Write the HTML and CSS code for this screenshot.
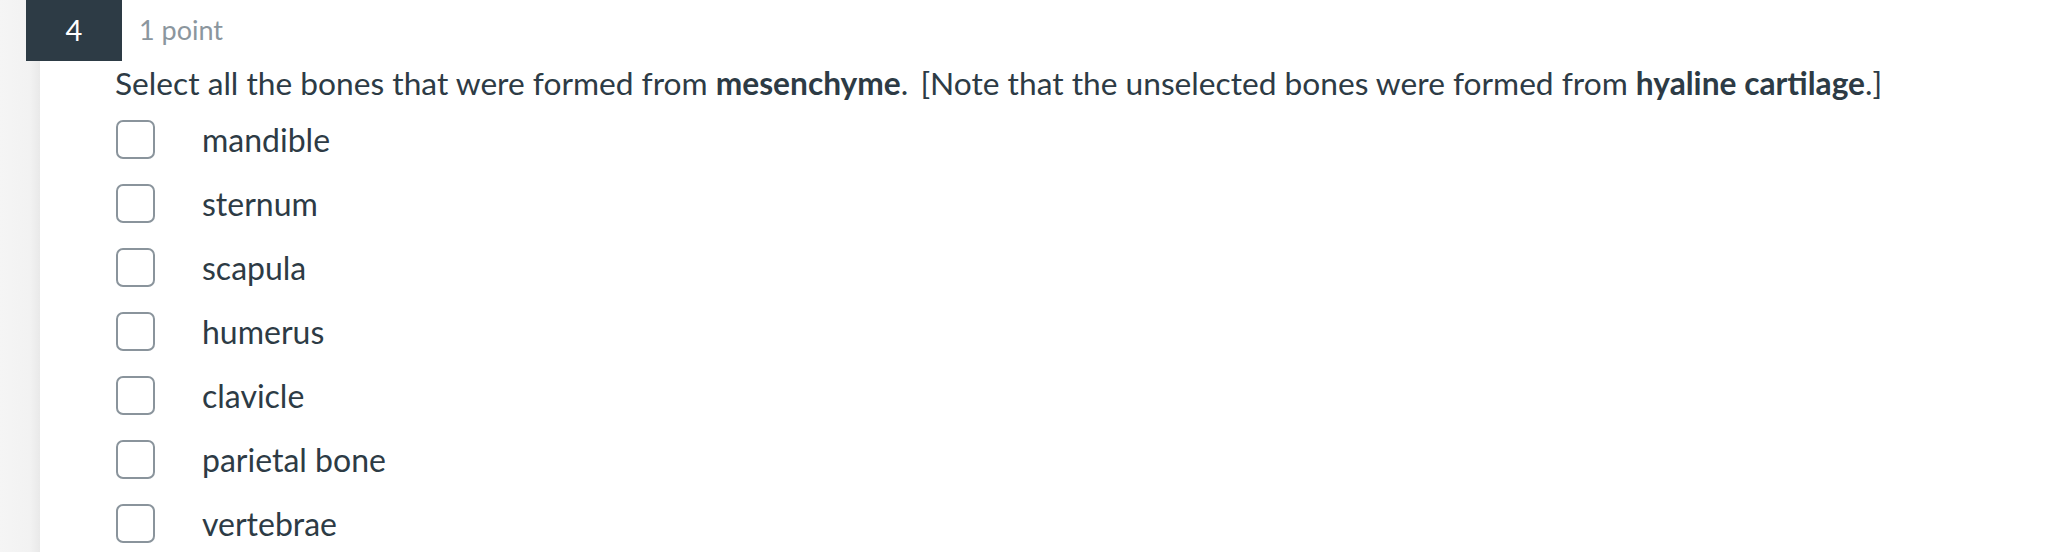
FILE: index.html
```html
<!DOCTYPE html>
<html>
<head>
	<title>Question 4</title>
	<link rel="stylesheet" href="styles.css">
</head>
<body>
	<div class="question">
		<div class="question-header">
			<div class="question-number">4</div>
			<div class="question-points">1 point</div>
		</div>
		<div class="question-text">
			Select all the bones that were formed from <strong>mesenchyme</strong>.<span class="gap"> </span>[Note that the unselected bones were formed from <strong>hyaline cartilage</strong>.]
		</div>
		<ul class="answers">
			<li class="answer"><span class="check"></span><span class="label">mandible</span></li>
			<li class="answer"><span class="check"></span><span class="label">sternum</span></li>
			<li class="answer"><span class="check"></span><span class="label">scapula</span></li>
			<li class="answer"><span class="check"></span><span class="label">humerus</span></li>
			<li class="answer"><span class="check"></span><span class="label">clavicle</span></li>
			<li class="answer"><span class="check"></span><span class="label">parietal bone</span></li>
			<li class="answer"><span class="check"></span><span class="label">vertebrae</span></li>
		</ul>
	</div>
</body>
</html>
```

FILE: styles.css
```css
html,body{
	height: 100%;
}
body{
	margin: 0;
	font-family: Lato, "Open Sans", sans-serif;
	color: #2d3b45;
	background: linear-gradient(to right, #f5f5f5 0, #f2f2f2 30px, #e9e9e9 40px, #fff 40px) no-repeat;
	background-color: #fff;
}
.question{
	padding-left: 26px;
}
.question-header{
	display: flex;
	align-items: flex-start;
}
.question-number{
	width: 96px;
	height: 61px;
	background-color: #2d3b45;
	color: #fff;
	font-size: 29px;
	line-height: 60px;
	text-align: center;
}
.question-points{
	margin-left: 17px;
	padding-top: 13px;
	font-size: 27px;
	color: #8b969e;
}
.question-text{
	margin: 2px 0 4px 89px;
	font-size: 31.7px;
	line-height: 40px;
}
.question-text strong{
	font-weight: 700;
}
.gap{
	margin-right: 4px;
}
.answers{
	list-style: none;
	margin: 0;
	padding: 0 0 0 90px;
}
.answer{
	display: flex;
	align-items: center;
	height: 64px;
}
.check{
	width: 35px;
	height: 35px;
	border: 2px solid #8a949c;
	border-radius: 7px;
	box-sizing: content-box;
}
.label{
	margin-left: 47px;
	font-size: 32px;
	padding-top: 1px;
}
```
